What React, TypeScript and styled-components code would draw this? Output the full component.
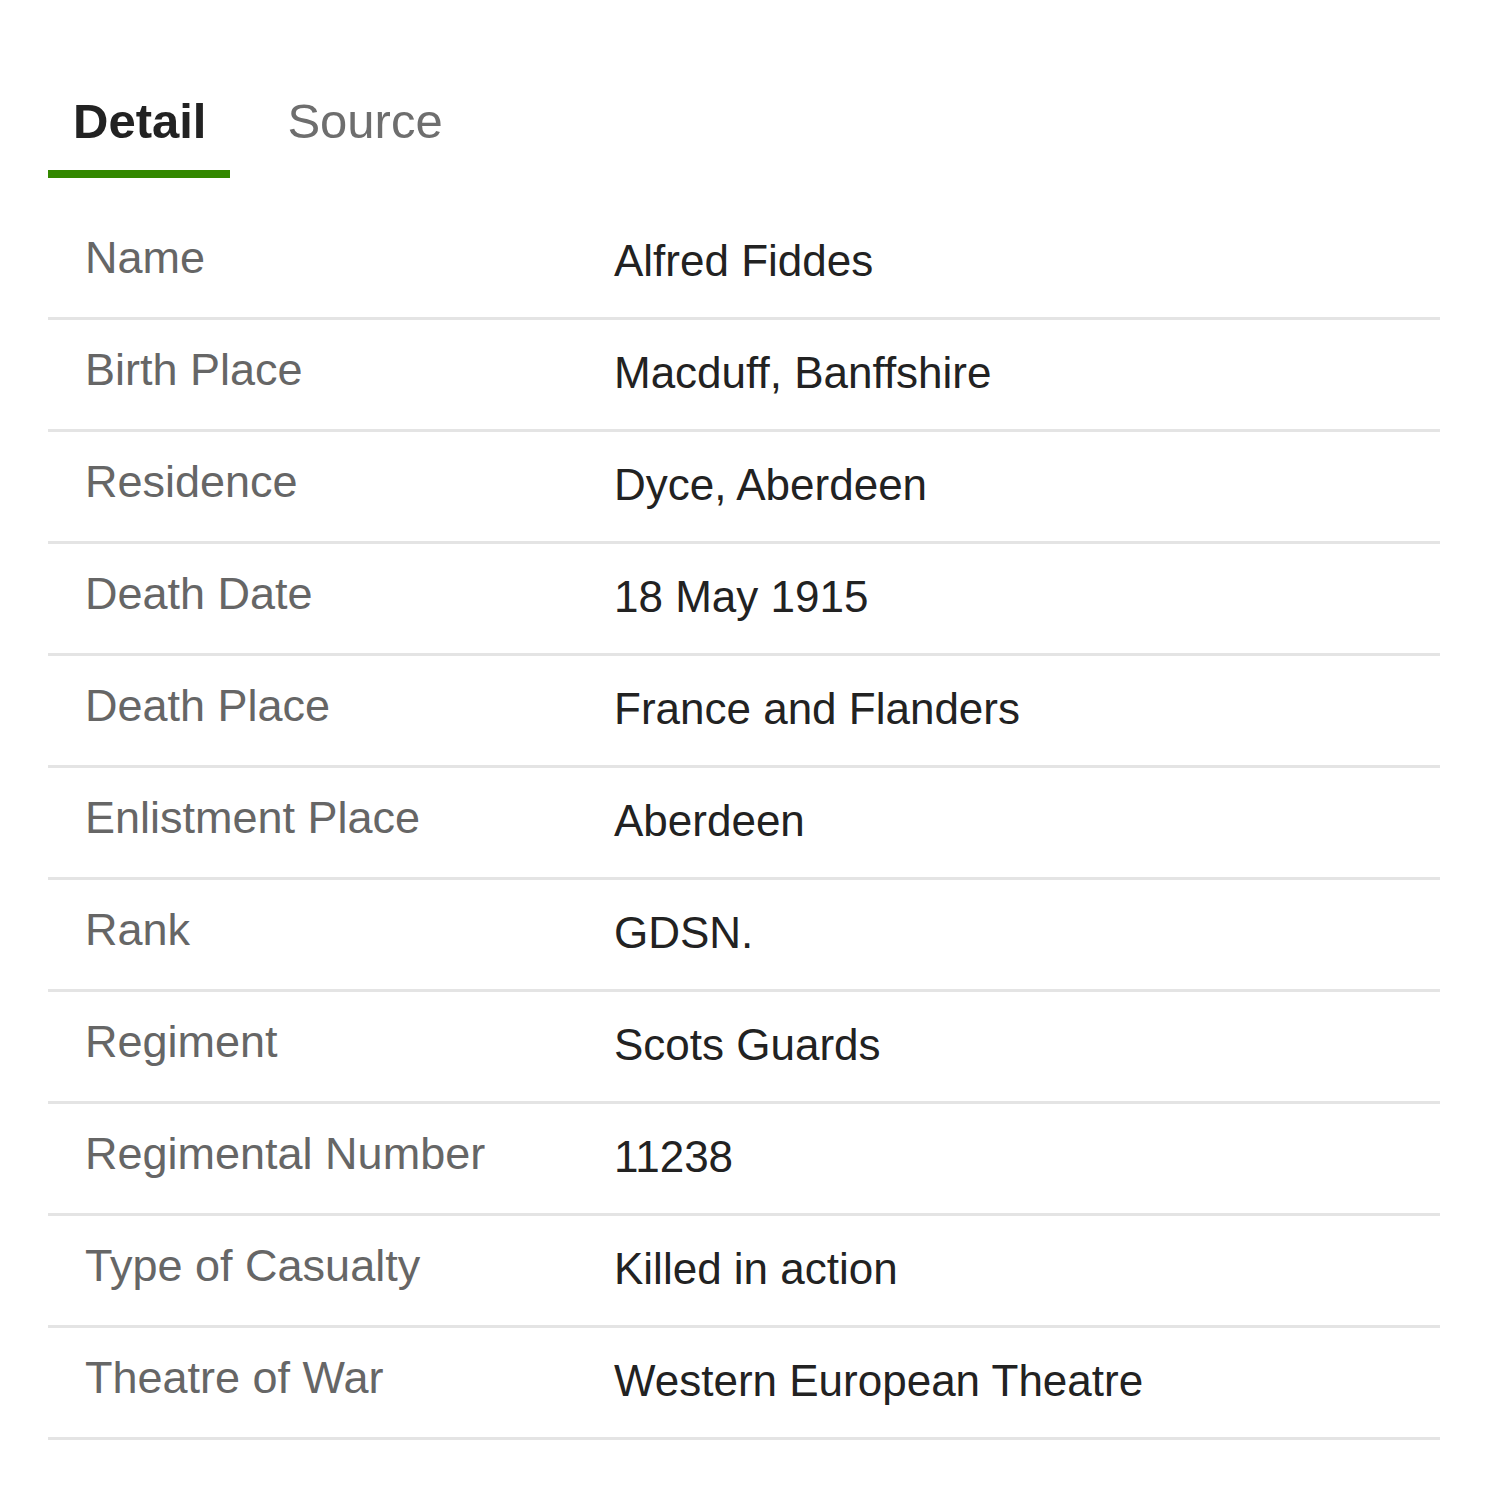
import React from 'react'
import styled, {createGlobalStyle} from 'styled-components'

const GlobalStyle = createGlobalStyle`
  html, body {
    margin: 0;
    padding: 0;
    background: #ffffff;
  }
  body {
    font-family: "Liberation Sans", Arial, sans-serif;
  }
`

const Page = styled.div`
  padding: 92px 60px 60px 48px;
  width: 1392px;
`

const TabBar = styled.div`
  display: flex;
  gap: 32px;
`

const Tab = styled.div<{$active?: boolean}>`
  padding: 0 24px 20px 25px;
  font-size: 49px;
  line-height: 58px;
  font-weight: ${(p) => (p.$active ? 700 : 400)};
  color: ${(p) => (p.$active ? '#222222' : '#6e6e6e')};
  border-bottom: 8px solid ${(p) => (p.$active ? '#338800' : 'transparent')};
  cursor: pointer;
`

const Table = styled.dl`
  margin: 30px 0 0;
  padding: 0;
`

const Row = styled.div`
  display: grid;
  grid-template-columns: 566px 1fr;
  border-bottom: 3px solid #e4e4e4;
`

const Label = styled.dt`
  margin: 0;
  padding: 24px 0 33px 37px;
  font-size: 45px;
  line-height: 52px;
  color: #666666;
`

const Value = styled.dd`
  margin: 0;
  padding: 27px 0 30px 0;
  font-size: 44px;
  line-height: 52px;
  color: #222222;
`

const rows: [string, string][] = [
  ['Name', 'Alfred Fiddes'],
  ['Birth Place', 'Macduff, Banffshire'],
  ['Residence', 'Dyce, Aberdeen'],
  ['Death Date', '18 May 1915'],
  ['Death Place', 'France and Flanders'],
  ['Enlistment Place', 'Aberdeen'],
  ['Rank', 'GDSN.'],
  ['Regiment', 'Scots Guards'],
  ['Regimental Number', '11238'],
  ['Type of Casualty', 'Killed in action'],
  ['Theatre of War', 'Western European Theatre'],
]

export default function App() {
  return (
    <>
      <GlobalStyle />
      <Page>
        <TabBar>
          <Tab $active>Detail</Tab>
          <Tab>Source</Tab>
        </TabBar>
        <Table>
          {rows.map(([label, value]) => (
            <Row key={label}>
              <Label>{label}</Label>
              <Value>{value}</Value>
            </Row>
          ))}
        </Table>
      </Page>
    </>
  )
}
